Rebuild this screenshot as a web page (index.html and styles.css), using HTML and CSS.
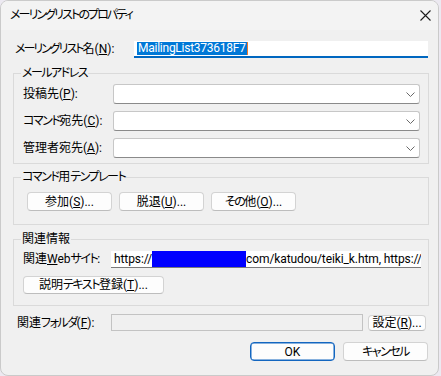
FILE: index.html
```html
<!DOCTYPE html>
<html lang="ja">
<head>
<meta charset="utf-8">
<title>メーリングリストのプロパティ</title>
<link rel="stylesheet" href="styles.css">
</head>
<body>
<div class="window">
  <div class="titlebar">
    <span class="title"><span class="k kt">メーリングリストのプロパティ</span></span>
    <svg class="close" width="11" height="11" viewBox="0 0 11 11"><path d="M0.5 0.5 L10.5 10.5 M10.5 0.5 L0.5 10.5" stroke="#1b1b1b" stroke-width="1.1" fill="none"/></svg>
  </div>
  <div class="content">
    <div class="name-row">
      <span class="name-lbl"><span class="k kn">メーリングリスト</span>名(<u>N</u>):</span>
      <div class="name-input"><span class="sel">MailingList373618F7</span><span class="caret"></span></div>
    </div>

    <fieldset class="group g-addr">
      <legend><span class="k">メールアドレス</span></legend>
      <div class="frow"><span class="flbl">投稿先(<u>P</u>):</span><div class="combo"><svg class="chev" width="9" height="5" viewBox="0 0 9 5"><path d="M0.5 0.5 L4.5 4.5 L8.5 0.5" stroke="#6a6a6a" stroke-width="1" fill="none"/></svg></div></div>
      <div class="frow"><span class="flbl"><span class="k">コマンド</span>宛先(<u>C</u>):</span><div class="combo"><svg class="chev" width="9" height="5" viewBox="0 0 9 5"><path d="M0.5 0.5 L4.5 4.5 L8.5 0.5" stroke="#6a6a6a" stroke-width="1" fill="none"/></svg></div></div>
      <div class="frow"><span class="flbl">管理者宛先(<u>A</u>):</span><div class="combo"><svg class="chev" width="9" height="5" viewBox="0 0 9 5"><path d="M0.5 0.5 L4.5 4.5 L8.5 0.5" stroke="#6a6a6a" stroke-width="1" fill="none"/></svg></div></div>
    </fieldset>

    <fieldset class="group g-tpl">
      <legend><span class="k">コマンド</span>用<span class="k">テンプレート</span></legend>
      <div class="btnrow">
        <button class="btn tpl-btn">参加(<u>S</u>)...</button>
        <button class="btn tpl-btn">脱退(<u>U</u>)...</button>
        <button class="btn tpl-btn"><span class="k">その</span>他(<u>O</u>)...</button>
      </div>
    </fieldset>

    <fieldset class="group g-info">
      <legend>関連情報</legend>
      <div class="web-row">
        <span class="web-lbl">関連<u>W</u>eb<span class="k">サイト</span>:</span>
        <div class="web-input">https://<span class="redact"></span>com/katudou/teiki_k.htm, https://</div>
      </div>
      <button class="btn desc-btn">説明<span class="k">テキスト</span>登録(<u>T</u>)...</button>
    </fieldset>

    <div class="folder-row">
      <span class="folder-lbl">関連<span class="k">フォルダ</span>(<u>F</u>):</span>
      <div class="folder-input"></div>
      <button class="btn set-btn">設定(<u>R</u>)...</button>
    </div>

    <div class="ok-row">
      <button class="btn ok-btn">OK</button>
      <button class="btn cancel-btn"><span class="k">キャンセル</span></button>
    </div>
  </div>
</div>
</body>
</html>
```

FILE: styles.css
```css
* { box-sizing: border-box; }
html, body { margin: 0; padding: 0; }
body {
  background: #ece9f1;
  width: 441px;
  height: 376px;
  overflow: hidden;
  font-family: Roboto, "Noto Sans CJK JP", sans-serif;
  font-size: 12px;
  color: #000;
  font-feature-settings: "palt";
}
u { text-decoration: underline; text-underline-offset: 1px; }
.k { letter-spacing: -1.5px; }
.kt { letter-spacing: -1.9px; }
.kn { letter-spacing: -2px; }

.window {
  width: 439px;
  height: 376px;
  background: #f0f0f0;
  border: 1px solid #cacaca;
  border-radius: 8px;
  overflow: hidden;
  display: flex;
  flex-direction: column;
}
.titlebar {
  height: 29px;
  flex: none;
  background: #f3f3f3;
  display: flex;
  align-items: center;
  justify-content: space-between;
  padding: 0 7px 1px 9px;
}
.title { font-size: 12px; line-height: 14px; }
.close { display: block; }

.content {
  padding: 0 10px 0 12px;
  display: flex;
  flex-direction: column;
}

.name-row {
  margin-top: 11px;
  height: 16px;
  display: flex;
  align-items: center;
}
.name-lbl { margin-left: 2px; width: 119px; line-height: 14px; }
.name-input {
  width: 294px;
  height: 17px;
  background: #fff;
  border-bottom: 2px solid #0067c0;
  padding: 1px 0 0 3px;
  display: flex;
  align-items: flex-start;
}
.sel {
  background: #0078d7;
  color: #fff;
  line-height: 13px;
  height: 13px;
  padding: 0 1px;
  letter-spacing: -0.25px;
}
.caret { width: 1px; height: 13px; background: #f07a2a; }

.group {
  margin: 0;
  width: 416px;
  border: 1px solid #dadada;
  padding: 0;
  min-width: 0;
}
.group legend {
  padding: 0 1px;
  line-height: 14px;
  height: 14px;
}
.g-addr { margin-top: 9px; padding: 4px 7px 5px 9px; }
.g-addr legend { margin-left: -2px; }
.frow { display: flex; align-items: center; height: 20px; }
.frow + .frow { margin-top: 7px; }
.flbl { width: 90px; line-height: 14px; }
.combo {
  width: 307px;
  height: 20px;
  background: #fff;
  border: 1px solid #c7c7c7;
  border-bottom-color: #8a8a8a;
  border-radius: 3px;
  display: flex;
  align-items: center;
  justify-content: flex-end;
  padding-right: 4px;
}
.chev { display: block; }

.g-tpl { margin-top: 6px; padding: 8px 0 13px 13px; }
.g-tpl legend { margin-left: -6px; }
.btnrow { display: flex; gap: 7px; }

.btn {
  font-family: inherit;
  font-size: 12px;
  font-feature-settings: "palt";
  color: #000;
  background: #fdfdfd;
  border: 1px solid #d3d3d3;
  border-bottom-color: #bdbdbd;
  border-radius: 4px;
  padding: 0;
  margin: 0;
  line-height: 14px;
  display: flex;
  align-items: center;
  justify-content: center;
}
.tpl-btn { width: 85px; height: 19px; }

.g-info { margin-top: 7px; padding: 5px 0 11px 9px; }
.g-info legend { margin-left: -2px; }
.web-row { display: flex; align-items: center; height: 16px; }
.web-lbl { width: 88px; line-height: 14px; }
.web-input {
  width: 310px;
  height: 17px;
  background: #fff;
  border-bottom: 1px solid #7a7a7a;
  padding-left: 3px;
  white-space: nowrap;
  overflow: hidden;
  line-height: 16px;
  letter-spacing: -0.1px;
  display: flex;
  align-items: center;
}
.redact { display: inline-block; width: 94px; height: 16px; background: #0000ff; flex: none; }
.desc-btn { margin-top: 9px; width: 141px; height: 18px; }

.folder-row {
  margin-top: 8px;
  height: 17px;
  display: flex;
  align-items: center;
}
.folder-lbl { margin-left: 4px; width: 94px; line-height: 14px; }
.folder-input {
  width: 252px;
  height: 17px;
  border: 1px solid #c3c3c3;
  background: #f0f0f0;
}
.set-btn { margin-left: 5px; width: 58px; height: 16px; }

.ok-row {
  margin-top: 11px;
  display: flex;
  justify-content: flex-end;
  gap: 8px;
}
.ok-btn { width: 85px; height: 19px; border: 1px solid #1366c0; box-shadow: inset 0 0 0 0.5px #1366c0; }
.cancel-btn { width: 85px; height: 19px; }
```
